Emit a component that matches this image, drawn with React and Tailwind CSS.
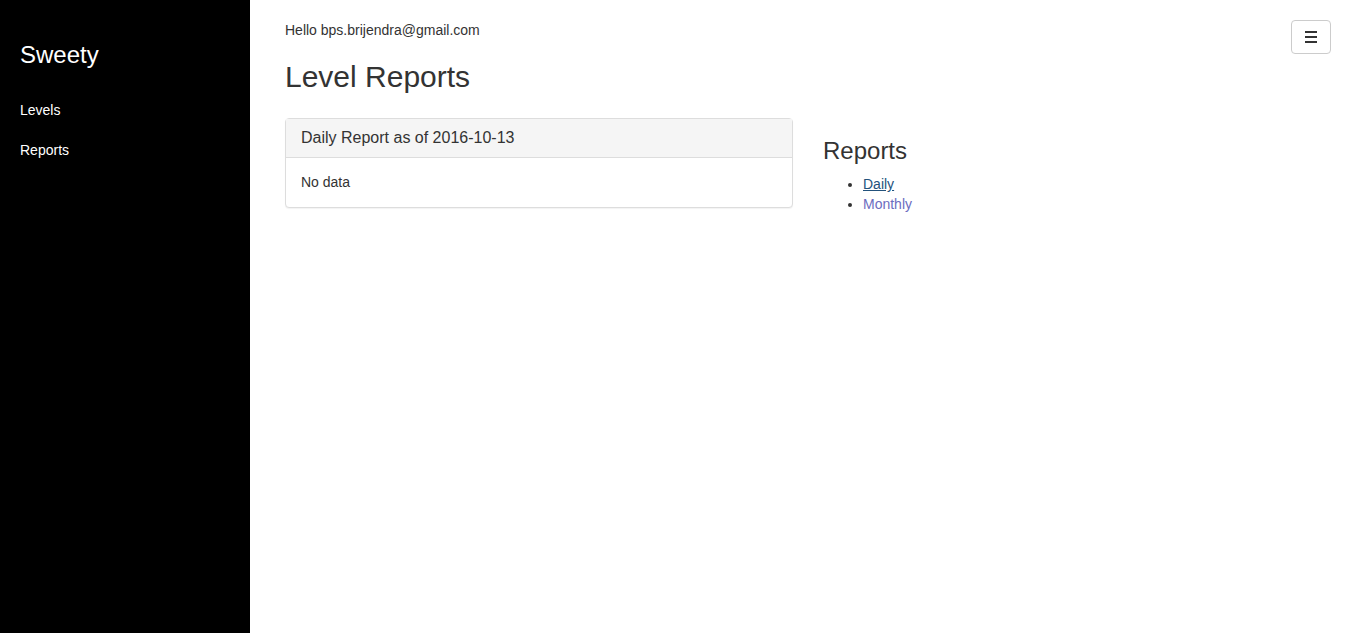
export default function App() {
  return (
    <div className="flex min-h-[633px] w-full text-[14px] leading-[20px] text-[#333]" style={{ fontFamily: '"Liberation Sans", Arial, sans-serif' }}>
      <aside className="w-[250px] shrink-0 bg-black text-white">
        <div className="px-5 pt-[40px] text-[24px] leading-[30px]">Sweety</div>
        <nav className="mt-[20px] flex flex-col">
          <a className="block px-5 py-[10px] text-white">Levels</a>
          <a className="block px-5 py-[10px] text-white">Reports</a>
        </nav>
      </aside>
      <main className="flex-1 px-[35px] pt-5">
        <div className="flex items-start justify-between">
          <div>Hello bps.brijendra@gmail.com</div>
          <button className="flex h-[34px] w-[40px] flex-col items-center justify-center gap-[3px] rounded border border-[#ccc] bg-white">
            <span className="block h-[2px] w-[12px] bg-[#333]"></span>
            <span className="block h-[2px] w-[12px] bg-[#333]"></span>
            <span className="block h-[2px] w-[12px] bg-[#333]"></span>
          </button>
        </div>
        <h1 className="mt-[6px] mb-[25px] text-[30px] leading-[33px] font-normal">Level Reports</h1>
        <div className="grid grid-cols-2 items-start gap-[30px]">
          <div className="rounded border border-[#ddd] bg-white shadow-[0_1px_1px_rgba(0,0,0,0.05)]">
            <div className="border-b border-[#ddd] bg-[#f5f5f5] px-[15px] py-[10px] text-[16px] leading-[17.6px]">Daily Report as of 2016-10-13</div>
            <div className="px-[15px] pt-[14px] pb-[15px]">No data</div>
          </div>
          <div>
            <h3 className="mt-5 mb-[10px] text-[24px] leading-[26.4px] font-normal">Reports</h3>
            <ul className="list-disc pl-10">
              <li><a className="text-[#23527c] underline">Daily</a></li>
              <li><a className="text-[#6c6cbf]">Monthly</a></li>
            </ul>
          </div>
        </div>
      </main>
    </div>
  );
}
